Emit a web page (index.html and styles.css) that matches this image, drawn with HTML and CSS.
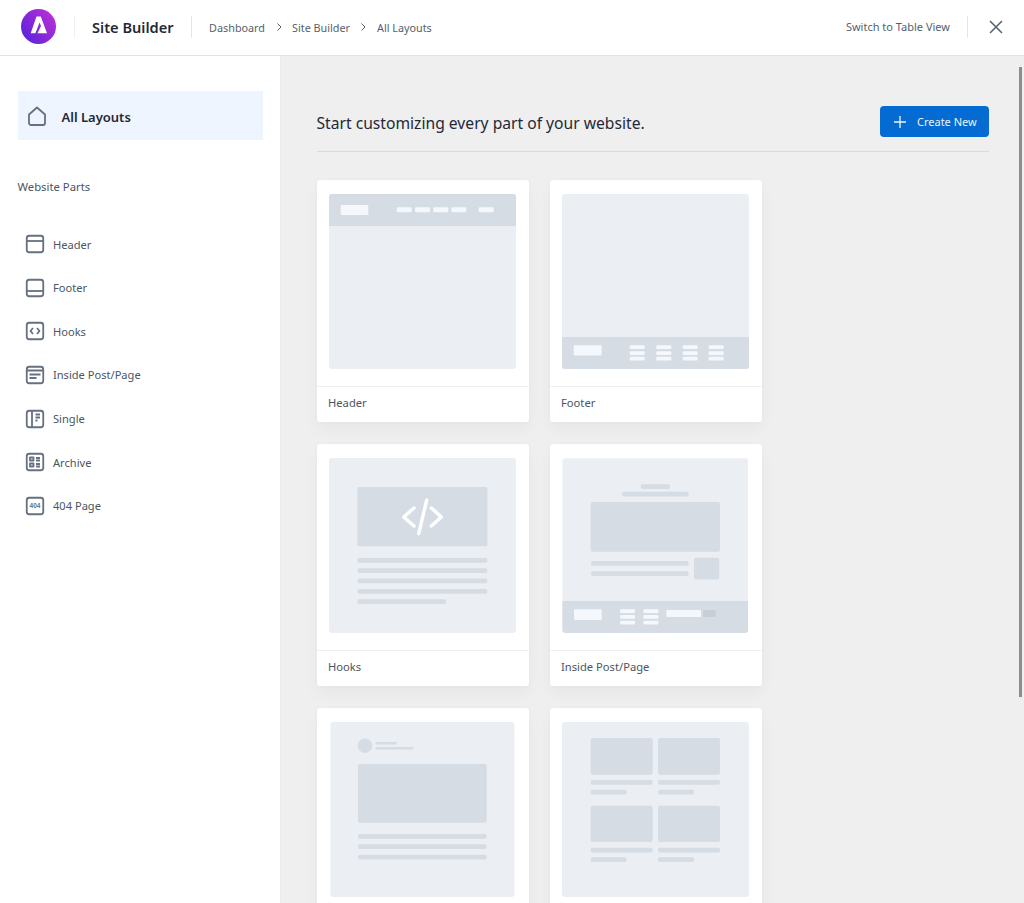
FILE: index.html
```html
<!DOCTYPE html>
<html lang="en">
<head>
<meta charset="utf-8">
<title>Site Builder</title>
<link rel="stylesheet" href="styles.css">
</head>
<body>
<div class="app">
  <header class="topbar">
    <div class="brand">
      <svg class="logo" viewBox="0 0 35 35" width="35" height="35">
        <defs><linearGradient id="lg" x1="0" y1="1" x2="1" y2="0.2"><stop offset="0" stop-color="#4f22dc"/><stop offset="1" stop-color="#bb2fd6"/></linearGradient></defs>
        <circle cx="17.5" cy="17.5" r="17.5" fill="url(#lg)"/>
        <path d="M15.5 7.500h4.300L26 24.300h-9.500l3.500-7.200-1.400-3.600-4.200 10.800H9.700z" fill="#fff"/>
      </svg>
    </div>
    <div class="title">Site Builder</div>
    <nav class="crumbs">
      <span>Dashboard</span>
      <svg class="chev" viewBox="0 0 8 10" width="8" height="10"><path d="M2.5 1.5 6 5 2.5 8.500"/></svg>
      <span>Site Builder</span>
      <svg class="chev" viewBox="0 0 8 10" width="8" height="10"><path d="M2.5 1.5 6 5 2.5 8.500"/></svg>
      <span>All Layouts</span>
    </nav>
    <div class="top-right">
      <span class="switch">Switch to Table View</span>
      <svg class="close" viewBox="0 0 14 14" width="14" height="14"><path d="M1 1l12 12M13 1 1 13"/></svg>
    </div>
  </header>
  <div class="body">
    <aside class="side">
      <div class="all">
        <svg class="ico-home" viewBox="0 0 20 20" width="20" height="20"><path d="M2 8.500 10 1.500l8 7v8.500a2 2 0 0 1-2 2H4a2 2 0 0 1-2-2z"/></svg>
        <span class="all-text">All Layouts</span>
      </div>
      <div class="parts">Website Parts</div>
      <ul class="nav">
        <li><svg class="ico" viewBox="0 0 20 20"><rect x="1.750" y="1.750" width="16.500" height="16.500" rx="2.500"/><path d="M1.750 7h16.500"/></svg>Header</li>
        <li><svg class="ico" viewBox="0 0 20 20"><rect x="1.750" y="1.750" width="16.500" height="16.500" rx="2.500"/><path d="M1.750 13h16.500"/></svg>Footer</li>
        <li><svg class="ico" viewBox="0 0 20 20"><rect x="1.750" y="1.750" width="16.500" height="16.500" rx="2.500"/><path d="M8 7 5.500 10 8 13M12 7l2.500 3-2.500 3"/></svg>Hooks</li>
        <li><svg class="ico" viewBox="0 0 20 20"><rect x="1.750" y="1.750" width="16.500" height="16.500" rx="2.500"/><path d="M1.750 5.500h16.500M4.500 9.500h11M4.500 13h7"/></svg>Inside Post/Page</li>
        <li><svg class="ico" viewBox="0 0 20 20"><rect x="1.750" y="1.750" width="16.500" height="16.500" rx="2.500"/><path d="M7 1.750v16.500M10.500 5.500h4.500M10.500 8.500h4.500M10.500 11.500h2"/></svg>Single</li>
        <li><svg class="ico" viewBox="0 0 20 20"><rect x="1.750" y="1.750" width="16.500" height="16.500" rx="2.500"/><path d="M5 5.500h3.500v3H5zM5 11.500h3.500v3H5zM11 6h4M11 8.500h4M11 12h4M11 14.500h4"/></svg>Archive</li>
        <li><svg class="ico" viewBox="0 0 20 20"><rect x="1.750" y="1.750" width="16.500" height="16.500" rx="2.500"/><text x="10" y="12" class="ico-text">404</text></svg>404 Page</li>
      </ul>
    </aside>
    <main class="main">
      <div class="head">
        <h1>Start customizing every part of your website.</h1>
        <button class="create"><svg viewBox="0 0 14 14" width="14" height="14"><path d="M7 1v12M1 7h12"/></svg>Create New</button>
      </div>
      <div class="grid">
        <article class="card">
          <svg class="thumb" viewBox="0 0 187 175">
            <rect class="a" width="187" height="175" rx="3"/><path class="b" d="M3 0h181a3 3 0 0 1 3 3v29H0V3a3 3 0 0 1 3-3z"/>
            <rect class="w" x="11.700" y="11" width="27.600" height="10" rx="1"/>
            <rect class="w" x="67.700" y="13.300" width="15" height="5" rx="1"/><rect class="w" x="86" y="13.300" width="15" height="5" rx="1"/><rect class="w" x="104.300" y="13.300" width="15" height="5" rx="1"/><rect class="w" x="122.300" y="13.300" width="15" height="5" rx="1"/><rect class="w" x="149.700" y="13.300" width="15" height="5" rx="1"/>
          </svg>
          <div class="label">Header</div>
        </article>
        <article class="card">
          <svg class="thumb" viewBox="0 0 187 175">
            <rect class="a" width="187" height="175" rx="3"/><path class="b" d="M0 143h187v29a3 3 0 0 1-3 3H3a3 3 0 0 1-3-3z"/>
            <rect class="w" x="11.700" y="151.300" width="28" height="10.300" rx="1"/>
            <g class="w"><rect x="67.700" y="151.300" width="15" height="3.800" rx="1"/><rect x="67.700" y="157.300" width="15" height="3.800" rx="1"/><rect x="67.700" y="162.700" width="15" height="3.800" rx="1"/>
            <rect x="94.300" y="151.300" width="15" height="3.800" rx="1"/><rect x="94.300" y="157.300" width="15" height="3.800" rx="1"/><rect x="94.300" y="162.700" width="15" height="3.800" rx="1"/>
            <rect x="120.700" y="151.300" width="15" height="3.800" rx="1"/><rect x="120.700" y="157.300" width="15" height="3.800" rx="1"/><rect x="120.700" y="162.700" width="15" height="3.800" rx="1"/>
            <rect x="146.700" y="151.300" width="15" height="3.800" rx="1"/><rect x="146.700" y="157.300" width="15" height="3.800" rx="1"/><rect x="146.700" y="162.700" width="15" height="3.800" rx="1"/></g>
          </svg>
          <div class="label">Footer</div>
        </article>
        <article class="card">
          <svg class="thumb" viewBox="0 0 187 175">
            <rect class="a" width="187" height="175" rx="3"/>
            <rect class="b" x="28.400" y="29" width="130" height="59.300" rx="2"/>
            <path class="code" d="M85 50 74.700 59 85 68M102.300 50l10 9-10 9M97.700 42.300 89.700 75.600"/>
            <g class="b"><rect x="28.400" y="100" width="130" height="4.700" rx="2"/><rect x="28.400" y="110.300" width="130" height="4.700" rx="2"/><rect x="28.400" y="120.600" width="130" height="4.700" rx="2"/><rect x="28.400" y="131" width="130" height="4.700" rx="2"/><rect x="28.400" y="141.300" width="88.700" height="4.700" rx="2"/></g>
          </svg>
          <div class="label">Hooks</div>
        </article>
        <article class="card">
          <svg class="thumb" viewBox="0 0 187 175">
            <rect class="a" x="0.400" y="0.300" width="185.600" height="174.400" rx="3"/>
            <g class="b"><rect x="78.700" y="26.300" width="29.300" height="4.700" rx="2"/><rect x="60" y="33.700" width="66.700" height="4.700" rx="2"/>
            <rect x="28.700" y="44" width="129.300" height="49.700" rx="2"/>
            <rect x="29" y="103" width="97.700" height="4.700" rx="2"/><rect x="29" y="113.300" width="97.700" height="4.700" rx="2"/>
            <rect x="132" y="99.700" width="25.300" height="21.700" rx="2"/>
            <path d="M.4 143H186v29a3 3 0 0 1-3 3H3.400a3 3 0 0 1-3-3z"/></g>
            <g class="w"><rect x="12" y="151.300" width="27.700" height="10.700" rx="1"/>
            <rect x="58" y="151.300" width="15" height="3.800" rx="1"/><rect x="58" y="157" width="15" height="3.800" rx="1"/><rect x="58" y="162.700" width="15" height="3.800" rx="1"/>
            <rect x="81.400" y="151.300" width="15" height="3.800" rx="1"/><rect x="81.400" y="157" width="15" height="3.800" rx="1"/><rect x="81.400" y="162.700" width="15" height="3.800" rx="1"/>
            <rect x="104.400" y="152" width="34.600" height="7" rx="1"/></g>
            <rect class="c" x="141" y="152" width="12.700" height="7" rx="1"/>
          </svg>
          <div class="label">Inside Post/Page</div>
        </article>
        <article class="card">
          <svg class="thumb" viewBox="0 0 187 175">
            <rect class="a" x="1.400" width="184" height="175" rx="3"/>
            <g class="b"><circle cx="36" cy="23.700" r="7.300"/><rect x="46.400" y="20" width="21.300" height="2.400" rx="1"/><rect x="46.400" y="25" width="38.300" height="2.600" rx="1"/>
            <rect x="29" y="42" width="128.700" height="58.700" rx="2"/>
            <rect x="29" y="112" width="128.700" height="4.700" rx="2"/><rect x="29" y="122.300" width="128.700" height="4.700" rx="2"/><rect x="29" y="132.700" width="128.700" height="4.700" rx="2"/></g>
          </svg>
        </article>
        <article class="card">
          <svg class="thumb" viewBox="0 0 187 175">
            <rect class="a" width="187" height="175" rx="3"/>
            <g class="b"><rect x="28.700" y="16" width="62" height="36.700" rx="2"/><rect x="96" y="16" width="62" height="36.700" rx="2"/>
            <rect x="28.700" y="58" width="62" height="4.700" rx="2"/><rect x="96" y="58" width="62" height="4.700" rx="2"/>
            <rect x="28.700" y="67.700" width="36" height="4.700" rx="2"/><rect x="96" y="67.700" width="36" height="4.700" rx="2"/>
            <rect x="28.700" y="83.700" width="62" height="36.300" rx="2"/><rect x="96" y="83.700" width="62" height="36.300" rx="2"/>
            <rect x="28.700" y="125.700" width="62" height="4.700" rx="2"/><rect x="96" y="125.700" width="62" height="4.700" rx="2"/>
            <rect x="28.700" y="135.300" width="36" height="4.700" rx="2"/><rect x="96" y="135.300" width="36" height="4.700" rx="2"/></g>
          </svg>
        </article>
      </div>
      <div class="scrollbar"></div>
    </main>
  </div>
</div>
</body>
</html>
```
FILE: styles.css
```css
* { box-sizing: border-box; }
html, body { margin: 0; height: 100%; overflow: hidden; }
body { font-family: "Noto Sans", "Liberation Sans", sans-serif; color: #1f2937; background: #fff; }

.app { display: flex; flex-direction: column; height: 903px; }

.topbar { display: flex; align-items: center; height: 56px; flex: none; background: #fff; border-bottom: 1px solid #e2e2e4; padding: 0 21px 2px; }
.brand { display: flex; padding-right: 18px; margin-right: 18px; }
.logo { display: block; }
.title { font-size: 14.600px; font-weight: 600; color: #1f2937; line-height: 22px; padding: 0 17px; border-left: 1px solid #eef0f2; border-right: 1px solid #e4e6e9; height: 22px; margin-left: -18px; }
.crumbs { display: flex; align-items: center; gap: 9.500px; margin-left: 17.500px; padding-top: 1px; font-size: 10.800px; color: #565f6e; }
.chev { fill: none; stroke: #565f6e; stroke-width: 1; }
.top-right { margin-left: auto; display: flex; align-items: center; }
.switch { font-size: 11px; color: #565f6e; line-height: 22px; padding-right: 17px; border-right: 1px solid #e4e6e9; margin-right: 21px; }
.close { fill: none; stroke: #56606f; stroke-width: 1.500; display: block; }

.body { display: flex; flex: 1; min-height: 0; }

.side { width: 281px; flex: none; background: #fff; padding: 35px 17px 0 17.500px; border-right: 1px solid #ebebeb; }
.all { display: flex; align-items: center; height: 49px; background: #eef5fe; padding-left: 9px; gap: 15px; font-size: 13px; font-weight: 600; color: #1f2937; }
.all-text { padding-top: 3px; }
.ico-home { fill: none; stroke: #667080; stroke-width: 1.800; stroke-linejoin: round; }
.parts { margin-top: 37px; font-size: 11.300px; line-height: 20px; color: #4b5563; }
.nav { list-style: none; margin: 25.200px 0 0; padding: 0 0 0 7.500px; }
.nav li { display: flex; align-items: center; gap: 8px; height: 43.670px; font-size: 11.100px; color: #4b5563; }
.ico { width: 20px; height: 20px; flex: none; fill: none; stroke: #667080; stroke-width: 1.800; stroke-linejoin: round; }
.ico-text { font-family: "Liberation Sans", sans-serif; font-size: 6.500px; font-weight: 700; text-anchor: middle; fill: #667080; stroke: none; }

.main { flex: 1; min-width: 0; position: relative; background: #efefef; padding: 50px 35px 0 35.500px; overflow: hidden; }
.head { display: flex; align-items: center; justify-content: space-between; height: 46px; padding-bottom: 15px; border-bottom: 1px solid #d9dadd; }
h1 { margin: 0; padding-top: 4px; font-size: 15.650px; font-weight: 400; color: #1f2937; }
.create { display: flex; align-items: center; gap: 10px; height: 31px; width: 109px; padding: 1px 0 0 13px; background: #046bd2; border: 0; border-radius: 4px; color: #eaf3fc; font: inherit; font-size: 11px; }
.create svg { fill: none; stroke: #f0f6fd; stroke-width: 1.300; }

.grid { display: grid; grid-template-columns: 211.500px 211.500px; column-gap: 21.500px; row-gap: 22px; margin-top: 28px; padding-left: .5px; }
.card { height: 242px; background: #fff; border-radius: 3px; box-shadow: 0 8px 16px rgba(0, 0, 0, .04), 0 0 3px rgba(0, 0, 0, .03); display: flex; flex-direction: column; }
.thumb { display: block; width: 187px; height: 175px; margin: 14px 0 17px 12.300px; flex: none; }
.label { flex: 1; border-top: 1px solid #eeeff2; padding: 0 0 4px 11px; display: flex; align-items: center; font-size: 11.200px; color: #4b5563; }

.a { fill: #ebeef3; }
.b { fill: #d6dce4; }
.c { fill: #c8ced6; }
.w { fill: #f4f7fb; }
.code { fill: none; stroke: #fff; stroke-width: 3.500; stroke-linecap: round; stroke-linejoin: round; }

.scrollbar { position: absolute; right: 2px; top: 11px; width: 3px; height: 630px; background: #8d8d8d; }
```
